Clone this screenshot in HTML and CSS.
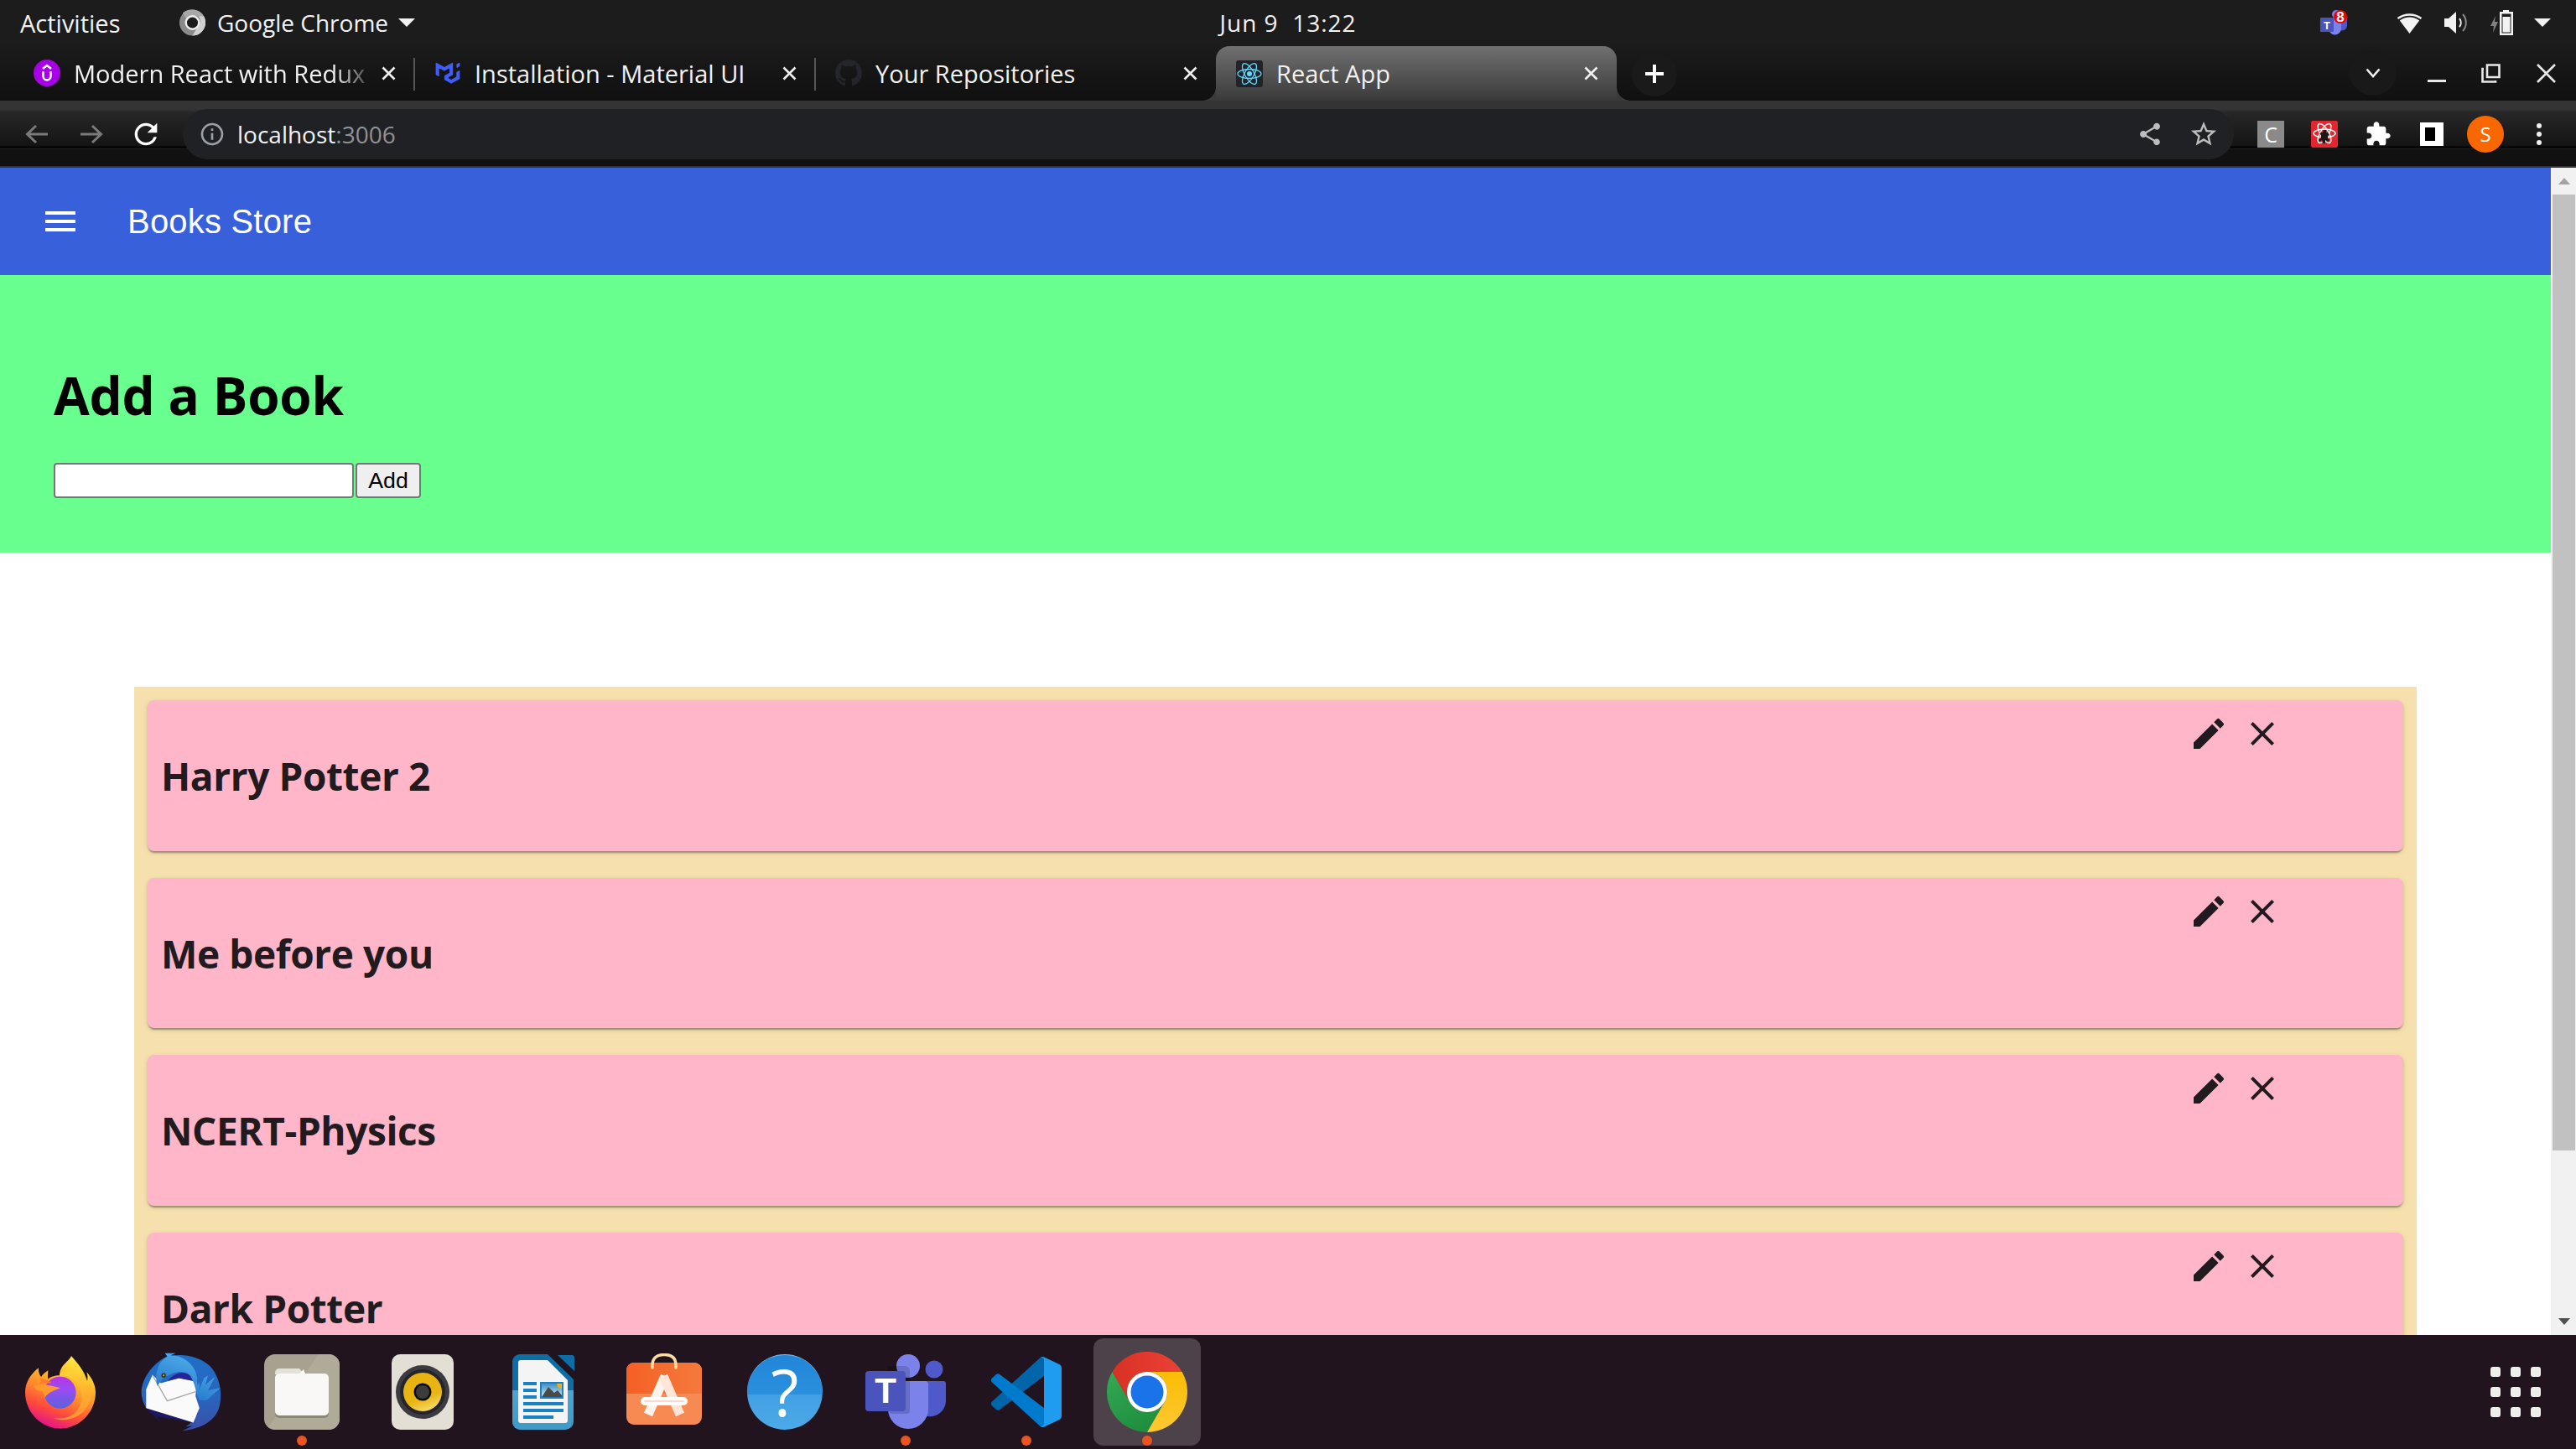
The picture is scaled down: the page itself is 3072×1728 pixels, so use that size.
FILE: index.html
```html
<!DOCTYPE html>
<html lang="en">
<head>
<meta charset="utf-8">
<title>React App</title>
<link rel="stylesheet" href="styles.css">
</head>
<body>
<header class="topbar">
  <div class="topbar-left">
    <span class="activities">Activities</span>
    <span class="app-menu">
      <svg class="app-chrome" viewBox="0 0 32 32"><circle cx="16" cy="16" r="16" fill="#8a8a8a"/><path d="M16 0a16 16 0 0 1 14 8H16a8 8 0 0 0-7 4L4 4a16 16 0 0 1 12-4z" fill="#a8a8a8"/><path d="M30 8a16 16 0 0 1-14 24l7-12a8 8 0 0 0-0-12z" fill="#d0d0d0"/><circle cx="16" cy="16" r="8" fill="#1c1c1c" stroke="#eee" stroke-width="2.5"/></svg>
      <span class="app-name">Google Chrome</span>
      <span class="tri"></span>
    </span>
  </div>
  <div class="clock">Jun 9&nbsp; 13:22</div>
  <div class="topbar-right">
    <svg class="tray-teams" viewBox="0 0 32 30"><circle cx="19" cy="5" r="5" fill="#7b83eb"/><path d="M24 9h8v10a6 6 0 0 1-8 5z" fill="#5059c9"/><path d="M10 9h15v13a7.500 7.500 0 0 1-15 0z" fill="#7b83eb"/><rect x="0" y="9" width="16" height="17" rx="1" fill="#4b53bc"/><text class="tray-t" x="8" y="23">T</text><circle cx="24" cy="8" r="8" fill="#f00000"/><text class="tray-8" x="24" y="14">8</text></svg>
    <svg class="tray-wifi" viewBox="0 0 31 25"><path d="M15.500 25 3.800 9.500A19 19 0 0 1 27.200 9.500z" fill="#f2f2f2"/><path d="M1.500 7A24 24 0 0 1 29.500 7" fill="none" stroke="#f2f2f2" stroke-width="2.500"/></svg>
    <svg class="tray-vol" viewBox="0 0 28 26"><path d="M0 8h5l9-8v26l-9-8H0z" fill="#f2f2f2"/><path d="M18 8a8 8 0 0 1 0 10" fill="none" stroke="#f2f2f2" stroke-width="2"/><path d="M22 3a15 15 0 0 1 0 20" fill="none" stroke="#888" stroke-width="2"/></svg>
    <svg class="tray-bat" viewBox="0 0 29 30"><path d="M6 7 0 19h4l-1 8 6-13H5z" fill="#808080"/><path d="M15 0h7v2h5v28H11V2h4z" fill="#f2f2f2"/><rect x="13.500" y="4.500" width="11" height="23" fill="#1c1c1c"/><rect x="14.500" y="8" width="9" height="18.500" fill="#f2f2f2"/></svg>
    <span class="tri tray-tri"></span>
  </div>
</header>

<div class="tabstrip">
  <div class="tab">
    <svg class="favicon" viewBox="0 0 32 32"><circle cx="16" cy="16" r="16" fill="#a800e6"/><path d="M11 11l5-4 5 4" fill="none" stroke="#fff" stroke-width="2.500"/><path d="M11.500 14v6a4.500 4.500 0 0 0 9 0v-6" fill="none" stroke="#fff" stroke-width="2.500"/></svg>
    <span class="tab-title tab-fade">Modern React with Redux</span>
    <svg class="tab-close" viewBox="0 0 17 17"><path d="M1.500 1.500l14 14M15.500 1.500l-14 14"/></svg>
    <span class="tab-sep"></span>
  </div>
  <div class="tab">
    <svg class="favicon" viewBox="-2 -4 40 40"><path fill="#3f5cf5" d="M30.343 21.976a1 1 0 00.502-.864l.018-5.787a1 1 0 01.502-.864l3.137-1.802a1 1 0 011.498.867v10.521a1 1 0 01-.502.867l-11.839 6.8a1 1 0 01-.994.001l-9.291-5.314a1 1 0 01-.504-.868v-5.305c0-.006.007-.01.013-.007.005.003.012 0 .012-.007v-.006c0-.004.002-.008.006-.01l7.652-4.396c.007-.004.004-.015-.004-.015a.008.008 0 01-.008-.008l.015-5.201a1 1 0 00-1.5-.87l-5.687 3.277a1 1 0 01-.998 0L6.666 9.700a1 1 0 00-1.499.866v9.400a1 1 0 01-1.496.869l-3.166-1.810a1 1 0 01-.504-.87l.028-16.430A1 1 0 011.527.860l10.845 6.229a1 1 0 00.996 0L24.210.860a1 1 0 011.498.868v16.434a1 1 0 01-.501.867l-5.678 3.270a1 1 0 00.004 1.735l3.132 1.783a1 1 0 00.993-.002l6.685-3.839zM31 7.234a1 1 0 001.514.857l3-1.800A1 1 0 0036 5.434V1.766A1 1 0 0034.486.910l-3 1.800a1 1 0 00-.486.857v3.668z"/></svg>
    <span class="tab-title">Installation - Material UI</span>
    <svg class="tab-close" viewBox="0 0 17 17"><path d="M1.500 1.500l14 14M15.500 1.500l-14 14"/></svg>
    <span class="tab-sep"></span>
  </div>
  <div class="tab">
    <svg class="favicon" viewBox="0 0 16 16"><path fill="#24262b" d="M8 0C3.580 0 0 3.580 0 8c0 3.540 2.290 6.530 5.470 7.590.4.070.55-.17.55-.38 0-.19-.01-.82-.01-1.490-2.010.37-2.530-.49-2.690-.94-.09-.23-.48-.94-.82-1.130-.28-.15-.68-.52-.01-.53.63-.01 1.080.58 1.230.82.72 1.210 1.870.87 2.330.66.07-.52.28-.87.51-1.070-1.780-.2-3.640-.89-3.640-3.950 0-.87.31-1.590.82-2.150-.08-.2-.36-1.020.08-2.120 0 0 .67-.21 2.200.82.64-.18 1.320-.27 2-.27.68 0 1.360.09 2 .27 1.530-1.040 2.200-.82 2.200-.82.44 1.100.16 1.920.08 2.120.51.56.82 1.270.82 2.150 0 3.070-1.870 3.750-3.650 3.950.29.25.54.73.54 1.480 0 1.070-.01 1.930-.01 2.200 0 .21.15.46.55.38A8.013 8.013 0 0016 8c0-4.420-3.580-8-8-8z"/></svg>
    <span class="tab-title">Your Repositories</span>
    <svg class="tab-close" viewBox="0 0 17 17"><path d="M1.500 1.500l14 14M15.500 1.500l-14 14"/></svg>
  </div>
  <div class="tab tab-active">
    <svg class="favicon" viewBox="0 0 32 32"><rect width="32" height="32" rx="3" fill="#20232a"/><circle cx="16" cy="16" r="3" fill="#61dafb"/><g fill="none" stroke="#61dafb" stroke-width="1.300"><ellipse cx="16" cy="16" rx="14" ry="5.500"/><ellipse cx="16" cy="16" rx="14" ry="5.500" transform="rotate(60 16 16)"/><ellipse cx="16" cy="16" rx="14" ry="5.500" transform="rotate(120 16 16)"/></g></svg>
    <span class="tab-title">React App</span>
    <svg class="tab-close" viewBox="0 0 17 17"><path d="M1.500 1.500l14 14M15.500 1.500l-14 14"/></svg>
  </div>
  <div class="newtab"><svg class="newtab-icon" viewBox="0 0 24 24"><path d="M12 1v22M1 12h22"/></svg></div>
  <div class="win-controls">
    <div class="tabsearch"><svg class="chev" viewBox="0 0 18 12"><path d="M1.500 1.500 9 10l7.500-8.500"/></svg></div>
    <div class="winbtn"><span class="win-min"></span></div>
    <div class="winbtn"><svg class="win-icon" viewBox="0 0 23 23"><path d="M7 1.500h14.500V16H7zM3 6H1.500v15.500H17V20" fill="none" stroke="#e8e8e8" stroke-width="2.600"/></svg></div>
    <div class="winbtn winbtn-close"><svg class="win-icon" viewBox="0 0 23 23"><path d="M1 1l21 21M22 1 1 22" fill="none" stroke="#e8e8e8" stroke-width="2.600"/></svg></div>
  </div>
</div>

<div class="toolbar">
  <div class="navbtn"><svg class="nav-arrow" viewBox="0 0 28 24"><path d="M27 12H3M13 2 2.500 12 13 22"/></svg></div>
  <div class="navbtn"><svg class="nav-arrow" viewBox="0 0 28 24"><path d="M1 12h24M15 2l10.500 10L15 22"/></svg></div>
  <div class="navbtn"><svg class="nav-reload" viewBox="0 0 24 24"><path d="M17.650 6.350A7.958 7.958 0 0 0 12 4c-4.420 0-7.990 3.580-7.990 8s3.570 8 7.990 8c3.730 0 6.840-2.550 7.730-6h-2.080A5.990 5.990 0 0 1 12 18c-3.310 0-6-2.690-6-6s2.690-6 6-6c1.660 0 3.140.69 4.220 1.780L13 11h7V4l-2.350 2.350z"/></svg></div>
  <div class="omnibox">
    <svg class="omni-info" viewBox="0 0 24 24"><path d="M11 7h2v2h-2zm0 4h2v6h-2zm1-9C6.480 2 2 6.480 2 12s4.480 10 10 10 10-4.480 10-10S17.520 2 12 2zm0 18c-4.410 0-8-3.590-8-8s3.590-8 8-8 8 3.590 8 8-3.590 8-8 8z"/></svg>
    <span class="url">localhost<span class="url-dim">:3006</span></span>
    <span class="omni-spacer"></span>
    <div class="omni-btn"><svg class="omni-share" viewBox="0 0 24 24"><path d="M18 16.080c-.76 0-1.440.3-1.960.77L8.910 12.700c.05-.23.09-.46.09-.7s-.04-.47-.09-.7l7.050-4.110c.54.5 1.250.81 2.040.81 1.660 0 3-1.340 3-3s-1.340-3-3-3-3 1.340-3 3c0 .24.04.47.09.7L8.040 9.810C7.500 9.310 6.790 9 6 9c-1.660 0-3 1.340-3 3s1.340 3 3 3c.79 0 1.500-.31 2.040-.81l7.120 4.160c-.05.21-.08.43-.08.65 0 1.610 1.310 2.920 2.920 2.920s2.920-1.310 2.920-2.920-1.310-2.920-2.920-2.920z"/></svg></div>
    <div class="omni-btn"><svg class="omni-star" viewBox="0 0 24 24"><path d="M22 9.240l-7.190-.62L12 2 9.190 8.630 2 9.240l5.460 4.730L5.820 21 12 17.270 18.180 21l-1.630-7.030L22 9.240zM12 15.400l-3.760 2.270 1-4.280-3.320-2.880 4.380-.38L12 6.100l1.710 4.040 4.380.38-3.320 2.880 1 4.280L12 15.400z"/></svg></div>
  </div>
  <div class="extensions">
    <div class="ext"><span class="ext-c">C</span></div>
    <div class="ext"><svg class="ext-icon" viewBox="0 0 32 32"><rect width="32" height="32" rx="2" fill="#e3252e"/><g fill="none" stroke="#fff" stroke-width="1.500"><ellipse cx="16" cy="15" rx="13" ry="5"/><ellipse cx="16" cy="15" rx="13" ry="5" transform="rotate(60 16 15)"/><ellipse cx="16" cy="15" rx="13" ry="5" transform="rotate(120 16 15)"/></g><path d="M15 11h3v3h2l2 3-2 1v3l2 2-2 2-2-2h-1v4h-3l-1-4-3 2-1-2 3-3v-3l-2-1 2-2h2z" fill="#1a1a1a"/></svg></div>
    <div class="ext"><svg class="ext-puzzle" viewBox="0 0 24 24"><path d="M20.500 11H19V7c0-1.100-.9-2-2-2h-4V3.500C13 2.120 11.880 1 10.500 1S8 2.120 8 3.500V5H4c-1.100 0-1.990.9-1.990 2v3.800H3.500c1.490 0 2.700 1.210 2.700 2.700s-1.210 2.700-2.700 2.700H2V20c0 1.100.9 2 2 2h3.800v-1.500c0-1.490 1.210-2.700 2.700-2.700 1.490 0 2.700 1.210 2.700 2.700V22H17c1.100 0 2-.9 2-2v-4h1.500c1.380 0 2.500-1.120 2.500-2.500S21.880 11 20.500 11z"/></svg></div>
    <div class="ext"><span class="ext-panel"><span class="ext-panel-inner"></span></span></div>
    <div class="ext"><span class="avatar">S</span></div>
    <div class="ext"><span class="kebab"><i></i><i></i><i></i></span></div>
  </div>
</div>

<div class="viewport">
  <main class="page">
    <div class="appbar">
      <span class="hamburger"><i></i><i></i><i></i></span>
      <span class="brand">Books Store</span>
    </div>
    <section class="add-book">
      <h1 class="add-title">Add a Book</h1>
      <form class="add-form">
        <input class="add-input" type="text">
        <button class="add-btn" type="button">Add</button>
      </form>
    </section>
    <section class="book-list">
      <article class="book-card">
        <div class="book-actions">
          <svg class="book-icon" viewBox="0 0 24 24"><path d="M3 17.250V21h3.750L17.810 9.940l-3.750-3.750L3 17.250zM20.710 7.040c.39-.39.39-1.020 0-1.410l-2.340-2.340a.9959.9959 0 0 0-1.410 0l-1.830 1.830 3.750 3.750 1.830-1.830z"/></svg>
          <svg class="book-icon" viewBox="0 0 24 24"><path d="M19 6.410 17.590 5 12 10.590 6.410 5 5 6.410 10.590 12 5 17.590 6.410 19 12 13.410 17.590 19 19 17.590 13.410 12z"/></svg>
        </div>
        <h2 class="book-title">Harry Potter 2</h2>
      </article>
      <article class="book-card">
        <div class="book-actions">
          <svg class="book-icon" viewBox="0 0 24 24"><path d="M3 17.250V21h3.750L17.810 9.940l-3.750-3.750L3 17.250zM20.710 7.040c.39-.39.39-1.020 0-1.410l-2.340-2.340a.9959.9959 0 0 0-1.410 0l-1.830 1.830 3.750 3.750 1.830-1.830z"/></svg>
          <svg class="book-icon" viewBox="0 0 24 24"><path d="M19 6.410 17.590 5 12 10.590 6.410 5 5 6.410 10.590 12 5 17.590 6.410 19 12 13.410 17.590 19 19 17.590 13.410 12z"/></svg>
        </div>
        <h2 class="book-title">Me before you</h2>
      </article>
      <article class="book-card">
        <div class="book-actions">
          <svg class="book-icon" viewBox="0 0 24 24"><path d="M3 17.250V21h3.750L17.810 9.940l-3.750-3.750L3 17.250zM20.710 7.040c.39-.39.39-1.020 0-1.410l-2.340-2.340a.9959.9959 0 0 0-1.410 0l-1.830 1.830 3.750 3.750 1.830-1.830z"/></svg>
          <svg class="book-icon" viewBox="0 0 24 24"><path d="M19 6.410 17.590 5 12 10.590 6.410 5 5 6.410 10.590 12 5 17.590 6.410 19 12 13.410 17.590 19 19 17.590 13.410 12z"/></svg>
        </div>
        <h2 class="book-title">NCERT-Physics</h2>
      </article>
      <article class="book-card">
        <div class="book-actions">
          <svg class="book-icon" viewBox="0 0 24 24"><path d="M3 17.250V21h3.750L17.810 9.940l-3.750-3.750L3 17.250zM20.710 7.040c.39-.39.39-1.020 0-1.410l-2.340-2.340a.9959.9959 0 0 0-1.410 0l-1.830 1.830 3.750 3.750 1.830-1.830z"/></svg>
          <svg class="book-icon" viewBox="0 0 24 24"><path d="M19 6.410 17.590 5 12 10.590 6.410 5 5 6.410 10.590 12 5 17.590 6.410 19 12 13.410 17.590 19 19 17.590 13.410 12z"/></svg>
        </div>
        <h2 class="book-title">Dark Potter</h2>
      </article>
    </section>
  </main>
  <div class="scrollbar">
    <div class="sb-btn"><span class="sb-up"></span></div>
    <div class="sb-thumb"></div>
    <div class="sb-rest"></div>
    <div class="sb-btn"><span class="sb-down"></span></div>
  </div>
</div>

<nav class="dock">
  <div class="dock-item"><div class="tile">
    <svg class="ic-firefox" viewBox="90 75 252 261">
      <defs>
        <linearGradient id="ffa" x1=".78" y1="0" x2=".38" y2="1"><stop offset="0" stop-color="#fff044"/><stop offset=".3" stop-color="#ffc12e"/><stop offset=".55" stop-color="#ff8a2b"/><stop offset=".78" stop-color="#ff4a3d"/><stop offset="1" stop-color="#e4138a"/></linearGradient>
        <linearGradient id="ffb" x1=".5" y1="0" x2=".5" y2="1"><stop offset="0" stop-color="#b833e1"/><stop offset=".4" stop-color="#9a4cf5"/><stop offset="1" stop-color="#5a62d8"/></linearGradient>
        <linearGradient id="ffc" x1="0" y1="0" x2="1" y2="1"><stop offset="0" stop-color="#ffe23a"/><stop offset="1" stop-color="#ff9a2e"/></linearGradient>
      </defs>
      <path fill="url(#ffa)" d="M255 75C248 95 215 105 213 145C195 145 180 150 172 158C170 145 172 135 172 127C160 135 152 142 147 150C140 142 137 130 138 118C110 140 90 170 90 205C90 275 146 335 216 335C286 335 342 275 342 205C342 180 330 155 310 133C314 145 314 155 312 165C300 125 280 105 255 75Z"/>
      <path fill="url(#ffc)" opacity=".75" d="M213 145C250 143 296 170 292 228C288 280 240 308 190 296C250 322 325 280 328 205C328 190 322 178 316 170C322 210 300 160 262 130C240 125 225 130 213 145Z"/>
      <circle cx="215" cy="206" r="57" fill="url(#ffb)"/>
      <path fill="#ff9b2c" d="M122 182C150 175 178 178 216 190C196 198 174 204 160 224C158 205 150 200 135 198C128 195 124 188 122 182Z"/>
      <path fill="#ff7a2c" d="M140 150C150 158 172 160 185 172C170 172 155 172 140 176C150 168 146 158 140 150Z"/>
    </svg>
  </div></div>
  <div class="dock-item"><div class="tile">
    <svg class="ic-bird" viewBox="504 68 288 284">
      <defs>
        <linearGradient id="tba" x1=".5" y1="0" x2=".6" y2="1"><stop offset="0" stop-color="#1e6fc8"/><stop offset=".6" stop-color="#2a64bd"/><stop offset="1" stop-color="#3a4fa8"/></linearGradient>
        <linearGradient id="tbb" x1=".7" y1="0" x2=".2" y2="1"><stop offset="0" stop-color="#55b4ec"/><stop offset="1" stop-color="#1e6fc8"/></linearGradient>
      </defs>
      <path fill="url(#tba)" d="M590 85C640 68 710 78 750 115C790 155 800 225 782 275C760 325 705 345 652 350L690 332 665 335C700 310 710 290 712 265L695 320 522 268C505 240 500 210 510 180C520 150 545 110 590 85Z"/>
      <path fill="#1c1763" d="M522 268 578 324 560 298 690 320 600 280Z"/>
      <path fill="#fafafa" d="M545 148 522 200 522 268 692 320 714 268 700 225 704 172 640 160 575 178Z"/>
      <path fill="none" stroke="#a8a8a8" stroke-width="4" d="M545 150 598 242 702 208"/>
      <path fill="#27239a" d="M600 170C630 130 680 130 700 172L640 160Z"/>
      <path fill="url(#tbb)" d="M562 188C552 150 560 105 598 82L590 70 628 70 610 78C660 78 700 115 706 160L702 190 715 175 712 205 730 160 745 150 735 185 770 155 745 205 790 195 740 240 715 240C700 215 700 180 680 150C650 125 610 140 580 165Z"/>
      <circle cx="585" cy="150" r="8" fill="#3a2a12"/><circle cx="585" cy="150" r="3.500" fill="#e09a20"/>
    </svg>
  </div></div>
  <div class="dock-item"><div class="tile">
    <svg class="ic-files" viewBox="0 0 90 90">
      <rect width="90" height="90" rx="13" fill="#a8a18f"/>
      <path d="M65 0h12a13 13 0 0 1 13 13v64a13 13 0 0 1-13 13H13a13 13 0 0 1-8-3z" fill="#b0aa99"/>
      <path d="M13 22a5 5 0 0 1 5-5h24l6 7h-35z" fill="#e4e1d9"/>
      <rect x="13" y="26" width="64" height="50" rx="5" fill="#8d8675"/>
      <path d="M13 28a5 5 0 0 1 5-5h24l5-5 2 5h23a5 5 0 0 1 5 5v40a5 5 0 0 1-5 5H18a5 5 0 0 1-5-5z" fill="#f9f8f7"/>
    </svg>
    <span class="dot"></span>
  </div></div>
  <div class="dock-item"><div class="tile">
    <svg class="ic-rhythm" viewBox="0 0 74 90">
      <defs><linearGradient id="rba" x1=".3" y1="0" x2=".7" y2="1"><stop offset="0" stop-color="#e8b20f"/><stop offset=".65" stop-color="#e9b514"/><stop offset="1" stop-color="#f8de70"/></linearGradient></defs>
      <rect width="74" height="90" rx="10" fill="#e3dfd4"/>
      <circle cx="37" cy="45" r="32" fill="#3b3b41"/><circle cx="37" cy="45" r="27" fill="#24242a"/>
      <circle cx="37" cy="45" r="23" fill="url(#rba)"/>
      <circle cx="37" cy="45" r="10.500" fill="#0c0c0c"/><circle cx="37" cy="45" r="8" fill="#3c3c3c"/>
    </svg>
  </div></div>
  <div class="dock-item"><div class="tile">
    <svg class="ic-writer" viewBox="0 0 74 90">
      <defs><linearGradient id="wra" x1="0" y1="0" x2="0" y2="1"><stop offset="0" stop-color="#0f6da6"/><stop offset=".48" stop-color="#0f6da6"/><stop offset=".48" stop-color="#4ca5cf"/><stop offset="1" stop-color="#3f9ac8"/></linearGradient>
      <linearGradient id="wrb" x1="0" y1="0" x2="0" y2="1"><stop offset="0" stop-color="#3f8fc4"/><stop offset="1" stop-color="#cfe6f3"/></linearGradient></defs>
      <path fill="url(#wra)" d="M9 0H42L73 30V80a10 10 0 0 1-10 10H9a9 9 0 0 1-9-9V9a9 9 0 0 1 9-9z"/>
      <path fill="#0f6da6" d="M54 1H71a3 3 0 0 1 3 3V20Z"/>
      <path fill="#f4f4f4" d="M10 7H42L66 31V79a3 3 0 0 1-3 3H10a3 3 0 0 1-3-3V10a3 3 0 0 1 3-3z"/>
      <g fill="#1a82c4"><rect x="13" y="33" width="16" height="4"/><rect x="13" y="41" width="16" height="4"/><rect x="13" y="49" width="16" height="4"/><rect x="13" y="57" width="48" height="4"/><rect x="13" y="65" width="48" height="4"/><rect x="13" y="73" width="36" height="4"/><rect x="33" y="33" width="28" height="20"/></g>
      <rect x="35" y="35" width="24" height="16" fill="url(#wrb)"/>
      <path d="M35 51 43 39 50 46 54 43 59 49V51z" fill="#4a4a4a"/>
      <path d="M53 35h6v6a6 6 0 0 1-6-6z" fill="#e6b21e"/>
    </svg>
  </div></div>
  <div class="dock-item"><div class="tile">
    <svg class="ic-store" viewBox="0 0 90 86">
      <defs><linearGradient id="sta" x1="0" y1="0" x2="1" y2="0"><stop offset="0" stop-color="#f55f24"/><stop offset="1" stop-color="#f47a3c"/></linearGradient></defs>
      <rect y="11" width="90" height="74" rx="9" fill="#f78a52"/>
      <path d="M9 11h72a9 9 0 0 1 9 9v28H0V20a9 9 0 0 1 9-9z" fill="url(#sta)"/>
      <path d="M31 17V14C31 5 37 1.500 45 1.500S59 5 59 14V17" fill="none" stroke="#fcdca0" stroke-width="3.500" stroke-linecap="round"/>
      <g fill="none" stroke-linecap="butt"><path d="M46 27 26 73" stroke="#fff4ec" stroke-width="11"/><path d="M44 27 64 73" stroke="#ffe6d8" stroke-width="11"/></g>
      <path d="M22 57H68" stroke="#fff" stroke-width="10" stroke-linecap="round"/>
      <path d="M22 57H68" stroke="#fbd8c8" stroke-width="2" stroke-linecap="round"/>
    </svg>
  </div></div>
  <div class="dock-item"><div class="tile">
    <div class="ic-help">?</div>
  </div></div>
  <div class="dock-item"><div class="tile">
    <svg class="ic-teams" viewBox="0 0 96 90">
      <circle cx="51" cy="14" r="14" fill="#7b83eb"/>
      <circle cx="82" cy="18" r="10.500" fill="#5059c9"/>
      <path d="M70 32H93a3 3 0 0 1 3 3V55A19 19 0 0 1 70 73Z" fill="#5059c9"/>
      <path d="M30 32H71a4 4 0 0 1 4 4V65A24 24 0 0 1 27 65V35a3 3 0 0 1 3-3z" fill="#7b83eb"/>
      <path d="M27 14H47a6 6 0 0 1 6 6V67a4 4 0 0 1-4 4H30C28 68 27 66 27 62Z" fill="#000" opacity=".16"/>
      <rect y="20" width="48" height="48" rx="4" fill="#4b53bc"/>
      <text class="teams-t" x="24" y="58">T</text>
    </svg>
    <span class="dot"></span>
  </div></div>
  <div class="dock-item"><div class="tile">
    <svg class="ic-code" viewBox="0 0 100 100">
      <path fill="#0065a9" d="M96.461 10.796L75.857.876a6.22 6.22 0 0 0-7.107 1.207L1.299 63.583c-1.815 1.654-1.813 4.511.004 6.162l5.51 5.009a4.15 4.15 0 0 0 5.321.236l81.227-61.621C96.086 11.303 100 13.246 100 16.667v-.239c0-2.401-1.375-4.590-3.539-5.632z"/>
      <path fill="#007acc" d="M96.461 89.204l-20.604 9.921a6.22 6.22 0 0 1-7.107-1.208L1.299 36.417c-1.815-1.654-1.813-4.511.004-6.162l5.510-5.009a4.15 4.15 0 0 1 5.321-.236l81.227 61.621C96.086 88.697 100 86.754 100 83.333v.239c0 2.401-1.375 4.590-3.539 5.632z"/>
      <path fill="#1f9cf0" d="M75.858 99.126a6.22 6.22 0 0 1-7.108-1.21C71.056 100.223 75 98.590 75 95.328V4.672c0-3.262-3.944-4.895-6.250-2.589a6.22 6.22 0 0 1 7.108-1.209l20.601 9.907A6.25 6.25 0 0 1 100 16.413v67.174a6.25 6.25 0 0 1-3.541 5.633z"/>
    </svg>
    <span class="dot"></span>
  </div></div>
  <div class="dock-item"><div class="tile tile-active">
    <svg class="ic-chrome" viewBox="0 0 96 96">
      <defs>
        <linearGradient id="cha" x1="0" y1="0" x2="1" y2="0"><stop offset="0" stop-color="#d93025"/><stop offset="1" stop-color="#ea4335"/></linearGradient>
        <linearGradient id="chb" x1=".1" y1="0" x2=".6" y2="1"><stop offset="0" stop-color="#34a853"/><stop offset="1" stop-color="#1e8e3e"/></linearGradient>
        <linearGradient id="chc" x1=".5" y1="0" x2=".5" y2="1"><stop offset="0" stop-color="#fbbc04"/><stop offset="1" stop-color="#fcc934"/></linearGradient>
      </defs>
      <path fill="url(#cha)" d="M6.400 24A48 48 0 0 1 89.600 24H48A24 24 0 0 0 27.200 60Z"/>
      <path fill="url(#chb)" d="M6.400 24A48 48 0 0 0 48 96L68.800 60A24 24 0 0 1 27.200 60Z"/>
      <path fill="url(#chc)" d="M89.600 24A48 48 0 0 1 48 96L68.800 60A24 24 0 0 0 48 24Z"/>
      <circle cx="48" cy="48" r="24" fill="#fff"/><circle cx="48" cy="48" r="19.500" fill="#1a73e8"/>
    </svg>
    <span class="dot"></span>
  </div></div>
  <div class="dock-item dock-grid"><span class="grid-dots"><i></i><i></i><i></i><i></i><i></i><i></i><i></i><i></i><i></i></span></div>
</nav>
</body>
</html>
```
FILE: styles.css
```css
* { box-sizing: border-box; }
html, body { margin: 0; height: 100%; }
body {
  display: flex;
  flex-direction: column;
  height: 100vh;
  overflow: hidden;
  font-family: "Open Sans", "Noto Sans", sans-serif;
  background: #fff;
}
svg { display: block; flex: none; }

/* GNOME top bar */
.topbar {
  height: 54px;
  flex: none;
  display: grid;
  grid-template-columns: 1fr auto 1fr;
  align-items: center;
  background: #1c1c1c;
  color: #f2f2f2;
  font-size: 28px;
}
.topbar-left { display: flex; align-items: center; padding-left: 24px; }
.activities { width: 190px; font-size: 29px; }
.app-menu { display: flex; align-items: center; }
.app-chrome { width: 31px; height: 32px; margin-right: 14px; }
.app-name { width: 216px; white-space: nowrap; }
.tri {
  width: 0;
  height: 0;
  border-left: 10px solid transparent;
  border-right: 10px solid transparent;
  border-top: 10px solid #f2f2f2;
}
.clock { white-space: pre; letter-spacing: 1px; }
.topbar-right { display: flex; align-items: center; justify-content: flex-end; padding-right: 30px; }
.tray-teams { width: 32px; height: 30px; margin-right: 59px; }
.tray-wifi { width: 31px; height: 25px; margin-right: 26px; }
.tray-vol { width: 28px; height: 26px; margin-right: 27px; }
.tray-bat { width: 29px; height: 30px; margin-right: 23px; }
.tray-t { font: 700 13px "Liberation Sans", sans-serif; fill: #fff; text-anchor: middle; }
.tray-8 { font: 700 17px "Liberation Sans", sans-serif; fill: #fff; text-anchor: middle; }

/* Tab strip */
.tabstrip {
  height: 66px;
  flex: none;
  display: flex;
  padding-left: 16px;
  padding-right: 4px;
  background: linear-gradient(#1b1b1b, #101010);
  color: #f1f1f1;
  font-size: 29px;
}
.tab {
  position: relative;
  width: 478px;
  flex: none;
  display: flex;
  align-items: center;
  padding-left: 24px;
  padding-right: 22px;
}
.favicon { width: 32px; height: 32px; margin-right: 16px; }
.tab-title { flex: 1; min-width: 0; white-space: nowrap; overflow: hidden; margin-right: 4px; }
.tab-fade {
  -webkit-mask-image: linear-gradient(90deg, #000 85%, transparent 100%);
  mask-image: linear-gradient(90deg, #000 85%, transparent 100%);
}
.tab-close { width: 17px; height: 17px; fill: none; stroke: #f1f1f1; stroke-width: 2.6; }
.tab-sep { position: absolute; right: -1px; top: 15px; height: 39px; width: 2px; background: #565656; }
.tab-active {
  margin-top: 1px;
  border-radius: 16px 16px 0 0;
  background: linear-gradient(#707070, #3a3a3a);
  padding-left: 24px;
}
.tab-active::before, .tab-active::after {
  content: "";
  position: absolute;
  bottom: 0;
  width: 16px;
  height: 16px;
}
.tab-active::before { left: -16px; background: radial-gradient(circle at 0 0, transparent 15.5px, #3a3a3a 16px); }
.tab-active::after { right: -16px; background: radial-gradient(circle at 100% 0, transparent 15.5px, #3a3a3a 16px); }
.newtab {
  width: 54px;
  height: 54px;
  margin: 7px 0 0 18px;
  border-radius: 50%;
  background: #1a1a1a;
  display: flex;
  align-items: center;
  justify-content: center;
}
.newtab-icon { width: 24px; height: 24px; fill: none; stroke: #fff; stroke-width: 4; }
.win-controls { margin-left: auto; display: flex; align-items: center; }
.tabsearch {
  width: 56px;
  height: 54px;
  margin-right: 16px;
  border-radius: 50%;
  background: #191919;
  display: flex;
  align-items: center;
  justify-content: center;
}
.chev { width: 18px; height: 12px; fill: none; stroke: #f0f0f0; stroke-width: 2.6; }
.winbtn { width: 64px; height: 54px; display: flex; align-items: center; justify-content: center; }
.winbtn-close { margin-left: 2px; }
.win-min { width: 22px; height: 3px; margin-top: 18px; background: #e8e8e8; }
.win-icon { width: 23px; height: 23px; }

/* Toolbar */
.toolbar {
  height: 80px;
  flex: none;
  display: flex;
  align-items: center;
  padding-left: 11px;
  background: linear-gradient(#343434 0, #343434 10px, #272727 14px, #141414 54px, #000 55px, #000 56px, #1b1b1b 57px, #111 59px, #111 78px, #333 78px);
}
.navbtn { width: 65px; display: flex; justify-content: center; }
.nav-arrow { width: 28px; height: 24px; fill: none; stroke: #7b7b7b; stroke-width: 3; }
.nav-reload { width: 40px; height: 40px; fill: #fff; }
.omnibox {
  flex: 1;
  min-width: 0;
  height: 60px;
  margin-left: 12px;
  display: flex;
  align-items: center;
  padding: 0 4px 0 19px;
  border-radius: 30px;
  background: #202124;
}
.omni-info { width: 32px; height: 32px; margin-right: 14px; fill: #9aa0a6; }
.url { color: #f1f1f1; font-size: 28px; }
.url-dim { color: #8f9296; }
.omni-spacer { flex: 1; }
.omni-btn { width: 64px; display: flex; justify-content: center; }
.omni-share { width: 32px; height: 32px; fill: #bdbdbd; }
.omni-star { width: 36px; height: 36px; fill: #bdbdbd; }
.extensions { display: flex; margin-left: 12px; padding-right: 12px; align-items: center; }
.ext { width: 64px; height: 44px; display: flex; align-items: center; justify-content: center; }
.ext-c {
  width: 32px;
  height: 32px;
  background: #8a8a8a;
  color: #fff;
  font-size: 25px;
  line-height: 32px;
  text-align: center;
}
.ext-icon { width: 32px; height: 32px; }
.ext-puzzle { width: 32px; height: 32px; fill: #fff; }
.ext-panel { width: 28px; height: 28px; background: #fff; padding: 6px 0 6px 6px; display: block; }
.ext-panel-inner { display: block; width: 12px; height: 16px; background: #000; }
.avatar {
  width: 44px;
  height: 44px;
  border-radius: 50%;
  background: #f96700;
  color: #fff;
  font-size: 24px;
  line-height: 44px;
  text-align: center;
}
.kebab { display: flex; flex-direction: column; gap: 4px; }
.kebab i { width: 6px; height: 6px; border-radius: 50%; background: #f1f1f1; }

/* Page */
.viewport { flex: 1; min-height: 0; display: flex; }
.page { flex: 1; min-width: 0; overflow: hidden; background: #fff; }
.appbar {
  height: 128px;
  display: flex;
  align-items: center;
  padding-left: 54px;
  background: #3760da;
  color: #fff;
}
.hamburger { width: 36px; display: flex; flex-direction: column; gap: 6px; margin-right: 62px; }
.hamburger i { height: 4px; background: #fff; }
.brand { font: 400 40px "Liberation Sans", Arial, sans-serif; letter-spacing: .2px; }
.add-book {
  height: 331px;
  padding: 103px 64px 0;
  background: #69ff8e;
}
.add-title {
  margin: 0 0 41px;
  font-size: 62px;
  line-height: 80px;
  font-weight: 700;
  color: #000;
  letter-spacing: -0.2px;
}
.add-form { display: flex; height: 42px; }
.add-input {
  width: 358px;
  height: 42px;
  margin: 0 2px 0 0;
  padding: 2px 4px;
  background: #fff;
  border: 2px solid #767676;
  border-radius: 4px;
}
.add-btn {
  width: 78px;
  height: 42px;
  margin: 0;
  padding: 0;
  background: #efefef;
  border: 2px solid #767676;
  border-radius: 4px;
  color: #000;
  font: 400 26.67px "Liberation Sans", Arial, sans-serif;
}
.book-list {
  margin: 160px 160px 0;
  padding: 16px 16px 0;
  background: #f5e0ae;
}
.book-card {
  height: 179.5px;
  margin-bottom: 32px;
  padding: 16px 0 0 16px;
  border-radius: 8px;
  background: #ffb6c8;
  color: #211a1e;
  box-shadow: 0 4px 2px -2px rgba(0,0,0,.2), 0 2px 2px rgba(0,0,0,.14), 0 2px 6px rgba(0,0,0,.12);
}
.book-actions { display: flex; justify-content: flex-end; gap: 16px; padding-right: 144px; }
.book-icon { width: 48px; height: 48px; fill: #211a1e; }
.book-title { margin: 0; font-size: 46px; line-height: 52px; font-weight: 700; letter-spacing: -0.4px; }

/* Scrollbar */
.scrollbar { width: 30px; flex: none; display: flex; flex-direction: column; background: #f1f1f1; }
.sb-btn { height: 32px; display: flex; align-items: center; justify-content: center; padding-left: 2px; }
.sb-up { border-left: 7px solid transparent; border-right: 7px solid transparent; border-bottom: 8px solid #a3a3a3; }
.sb-down { border-left: 7px solid transparent; border-right: 7px solid transparent; border-top: 8px solid #505050; }
.sb-thumb { height: 1140px; margin: 0 1px 0 2px; background: #c1c1c1; }
.sb-rest { flex: 1; }

/* Dock */
.dock { height: 136px; flex: none; display: flex; background: #21141f; }
.dock-item { width: 144px; display: flex; align-items: center; justify-content: center; }
.dock-grid { margin-left: auto; }
.tile {
  position: relative;
  width: 128px;
  height: 128px;
  display: flex;
  align-items: center;
  justify-content: center;
  border-radius: 12px;
}
.tile-active { background: #4d4249; }
.dot {
  position: absolute;
  left: 58px;
  bottom: 0;
  width: 12px;
  height: 12px;
  border-radius: 50%;
  background: #e95420;
}
.ic-firefox { width: 84px; height: 87px; }
.ic-bird { width: 96px; height: 94px; }
.ic-files { width: 90px; height: 90px; }
.ic-rhythm { width: 74px; height: 90px; }
.ic-writer { width: 74px; height: 90px; }
.ic-store { width: 90px; height: 86px; margin-top: -6px; }
.ic-help {
  width: 90px;
  height: 90px;
  border-radius: 50%;
  background: linear-gradient(#2286da 0, #2a90dc 53%, #429fe3 53%, #4daae8 100%);
  border-top: 1.5px solid #7fc0ee;
  color: #fff;
  font: 400 76px/88px "Open Sans", sans-serif;
  text-align: center;
}
.ic-teams { width: 96px; height: 90px; }
.ic-code { width: 84px; height: 84px; }
.ic-chrome { width: 96px; height: 96px; }
.teams-t { font: 700 42px "Liberation Sans", sans-serif; fill: #fff; text-anchor: middle; }
.grid-dots { display: grid; grid-template-columns: repeat(3, 12px); gap: 12px; }
.grid-dots i { width: 12px; height: 12px; border-radius: 3px; background: #eeeeec; }
```
